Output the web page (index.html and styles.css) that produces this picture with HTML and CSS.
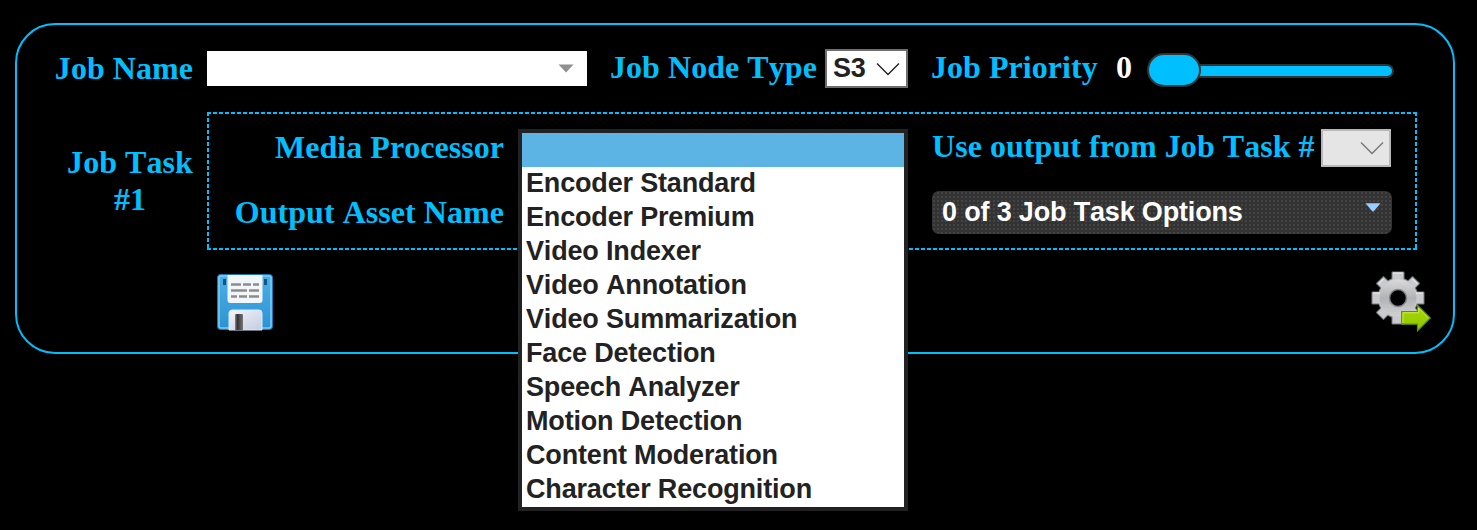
FILE: index.html
```html
<!DOCTYPE html>
<html lang="en">
<head>
<meta charset="utf-8">
<title>Media Job</title>
<link rel="stylesheet" href="styles.css">
</head>
<body>
<main class="card">
  <div class="row job">
    <label class="label name-label">Job Name</label>
    <div class="combo"><svg width="16" height="9" viewBox="0 0 16 9"><path d="M0.500 0.500h15L8 8.500z" fill="#909090"/></svg></div>
    <label class="label node-label">Job Node Type</label>
    <div class="select node">S3<svg width="24" height="14" viewBox="0 0 24 14"><path d="M1 1.500 12 12.500 23 1.500" fill="none" stroke="#222" stroke-width="1.400"/></svg></div>
    <label class="label priority-label">Job Priority</label>
    <span class="label priority-value">0</span>
    <div class="slider"><span class="thumb"></span><span class="track"></span></div>
  </div>
  <div class="row task">
    <div class="label task-label">Job Task<br>#1</div>
    <section class="task-box">
      <div class="names">
        <label class="label">Media Processor</label>
        <label class="label">Output Asset Name</label>
      </div>
      <div class="processor">
        <ul class="menu">
          <li class="selected"></li>
          <li>Encoder Standard</li>
          <li>Encoder Premium</li>
          <li>Video Indexer</li>
          <li>Video Annotation</li>
          <li>Video Summarization</li>
          <li>Face Detection</li>
          <li>Speech Analyzer</li>
          <li>Motion Detection</li>
          <li>Content Moderation</li>
          <li>Character Recognition</li>
        </ul>
      </div>
      <div class="settings">
        <div class="parent">
          <label class="label">Use output from Job Task #</label>
          <div class="select disabled"><svg width="24" height="14" viewBox="0 0 24 14"><path d="M1 1.500 12 12.500 23 1.500" fill="none" stroke="#777" stroke-width="1.400"/></svg></div>
        </div>
        <div class="options">0 of 3 Job Task Options<svg width="16" height="9" viewBox="0 0 16 9"><path d="M0.500 0.300h15L9 8q-1 1-2 0z" fill="#99ccff"/></svg></div>
      </div>
    </section>
  </div>
  <div class="row actions">
    <svg class="save" width="60" height="60" viewBox="0 0 60 60">
      <defs>
        <linearGradient id="disk" x2="0" y2="1"><stop stop-color="#4db1e6"/><stop offset="1" stop-color="#2c91d3"/></linearGradient>
        <linearGradient id="shutter" x2="1" y2="1"><stop stop-color="#f4f5fb"/><stop offset="1" stop-color="#c3cce0"/></linearGradient>
        <linearGradient id="slot" x2="1" y2="0"><stop stop-color="#888"/><stop offset=".3" stop-color="#333"/><stop offset="1" stop-color="#777"/></linearGradient>
      </defs>
      <rect x="2.500" y="2.500" width="55" height="55" rx="3" fill="url(#disk)" stroke="#1975b4"/>
      <rect x="4" y="4" width="52" height="52" rx="2" fill="none" stroke="#7bcbf3" stroke-width="1.500"/>
      <path d="M8 7h3v6H8zM49 7h3v6h-3z" fill="#145384"/>
      <path d="M12.500 3h35v25q0 3-3 3h-29q-3 0-3-3z" fill="#f3f6f8"/>
      <path d="M16 12.500h10M28 12.500h8M38 12.500h6M16 18.500h16M34 18.500h10M16 24.500h6M24 24.500h8M34 24.500h10" stroke="#8c8c8c" stroke-width="2.500"/>
      <path d="M14 58V41q0-3 3-3h27q3 0 3 3v17z" fill="url(#shutter)" stroke="#d6edf9"/>
      <path d="M20 58V43q0-1 1-1h6q1 0 1 1v15z" fill="url(#slot)"/>
    </svg>
    <svg class="run" width="62" height="62" viewBox="0 0 62 62">
      <defs>
        <linearGradient id="metal" gradientUnits="userSpaceOnUse" x1="0" y1="-26" x2="0" y2="26"><stop stop-color="#e8e8e9"/><stop offset=".5" stop-color="#b2b3b6"/><stop offset="1" stop-color="#dedee0"/></linearGradient>
        <linearGradient id="arrow" x2="0" y2="1"><stop stop-color="#a9d50a"/><stop offset="1" stop-color="#8fc800"/></linearGradient>
        <g id="cog">
          <circle r="19.500"/>
          <path d="M-5.500-25.500h11v51h-11zM-25.500-5.500h51v11h-51z"/>
          <path d="M-4.500-25h9v50h-9zM-25-4.500h50v9h-50z" transform="rotate(45)"/>
        </g>
      </defs>
      <g transform="translate(28 27)">
        <use href="#cog" fill="#77787b" stroke="#77787b" stroke-width="2" stroke-linejoin="round"/>
        <use href="#cog" fill="#c9cacd"/>
        <circle r="18.500" fill="url(#metal)"/>
        <path d="M-5-25H5M-25-5h7M18-5h7M-19.500-14l5-5M19.500-14l-5-5" stroke="#f6f6f6" fill="none"/>
        <circle r="8.500" fill="#000" stroke="#85868a" stroke-width="1.500"/>
      </g>
      <path d="M31.700 40.500H47.500v-6.200L60.300 47 47.500 59.700v-6.500H31.700z" fill="url(#arrow)" stroke="#5c9200" stroke-width="1.200"/>
      <path d="M33 52V41.800h15.700V37.300L58.300 47" fill="none" stroke="#c8ec4a"/>
    </svg>
  </div>
</main>
</body>
</html>
```
FILE: styles.css
```css
* { box-sizing: border-box; }
body { margin: 0; padding: 23px 22px 0 15px; background: #000; height: 530px; overflow: hidden; font-kerning: none; }
.card { height: 331px; border: 2px solid #00bfff; border-radius: 40px; padding-top: 24px; }
.row { display: flex; align-items: flex-start; }
.label { font: bold 32px/37px "Liberation Serif", "Times New Roman", serif; letter-spacing: 0.05px; color: #00bfff; white-space: nowrap; font-kerning: none; }
.job { height: 63px; }
.name-label { width: 190px; padding: 1px 14px 0 0; text-align: right; }
.combo { width: 380px; height: 35px; margin-top: 2px; padding: 13px 13px 0 0; background: #fff; text-align: right; line-height: 0; }
.node-label { width: 238px; padding-left: 23px; }
.select { display: flex; justify-content: space-between; align-items: center; height: 39px; padding: 0 6px; border: 2px solid #6e6e6e; background: #fff; color: #222; font: bold 27px/35px "Liberation Sans", Arial, sans-serif; letter-spacing: -0.17px; }
.node { width: 83px; }
.priority-label { width: 208px; padding-left: 23px; }
.priority-value { width: 31px; color: #fff; }
.slider { display: flex; align-items: center; width: 247px; height: 34px; margin-top: 4px; }
.thumb { width: 54px; height: 34px; border: 2px solid #333; border-radius: 17px; background: #00bfff; z-index: 1; }
.track { flex: 1; height: 14px; margin: 1px 0 0 -8px; border: 2px solid #333; border-radius: 7px; background: #00bfff; }
.task-label { width: 190px; padding: 32px 0 0 36px; text-align: center; }
.task-box {
  display: flex; width: 1210px; height: 138px; padding: 16px 0 0;
  background:
    repeating-linear-gradient(90deg, #00bfff 0 4px, transparent 4px 6px) top / 100% 2px no-repeat,
    repeating-linear-gradient(90deg, #00bfff 0 4px, transparent 4px 6px) bottom / 100% 2px no-repeat,
    repeating-linear-gradient(#00bfff 0 4px, transparent 4px 6px) left / 2px 100% no-repeat,
    repeating-linear-gradient(#00bfff 0 4px, transparent 4px 6px) right / 2px 100% no-repeat;
}
.names { display: flex; flex-direction: column; gap: 28px; width: 311px; padding: 1px 14px 0 0; text-align: right; }
.processor { position: relative; width: 390px; }
.menu { position: absolute; top: 1px; left: 0; width: 390px; margin: 0; padding: 0; border: 4px solid #222; background: #fff; list-style: none; z-index: 2; }
.menu li { height: 34px; padding-left: 4px; color: #222; font: bold 27px/32px "Liberation Sans", Arial, sans-serif; letter-spacing: -0.17px; font-kerning: none; }
.menu .selected { background: #5bb4e3; }
.settings { width: 460px; margin-left: 24px; }
.parent { display: flex; justify-content: space-between; width: 459px; }
.disabled { width: 70px; height: 38px; margin-top: 1px; justify-content: flex-end; border-color: #b8b8b8; background: #e5e5e5; padding-right: 5px; }
.options {
  display: flex; justify-content: space-between; height: 43px; margin-top: 24px; padding: 0 11px 0 10px; border-radius: 7px;
  background: radial-gradient(circle, #444 0 0.8px, #333 1.4px) 0 0 / 4px 4px;
  color: #fff; font: bold 27px/42px "Liberation Sans", Arial, sans-serif; letter-spacing: -0.17px; font-kerning: none;
}
.options svg { margin-top: 12px; }
.actions { justify-content: space-between; padding: 21px 21px 0 198px; }
.save { margin-top: 1px; }
```
